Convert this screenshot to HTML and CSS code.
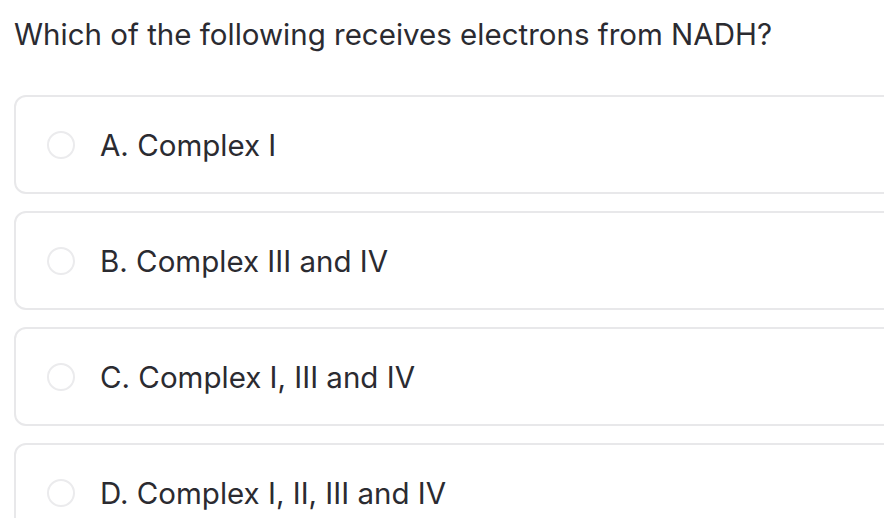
FILE: index.html
```html
<!DOCTYPE html>
<html lang="en">
<head>
    <meta charset="UTF-8">
    <title>Question</title>
    <link rel="stylesheet" href="styles.css">
</head>
<body>
    <div class="question">
        <h1 class="prompt">Which of the following receives electrons from NADH?</h1>

        <div class="choices">
            <label class="choice">
                <span class="radio"></span>
                <span class="choice-text">A. Complex I</span>
            </label>
            <label class="choice">
                <span class="radio"></span>
                <span class="choice-text">B. Complex III and IV</span>
            </label>
            <label class="choice">
                <span class="radio"></span>
                <span class="choice-text">C. Complex I, III and IV</span>
            </label>
            <label class="choice">
                <span class="radio"></span>
                <span class="choice-text">D. Complex I, II, III and IV</span>
            </label>
        </div>
    </div>
</body>
</html>
```

FILE: styles.css
```css
/* --- General Setup --- */
:root {
    --text-color: #2b2b31;
    --border-color: #e8e8ea;
}

body {
    margin: 0;
    overflow: hidden;
    background: #ffffff;
    font-family: 'Inter', 'Open Sans', sans-serif;
    color: var(--text-color);
}

.question {
    padding: 14px 0 0 14px;
}

/* --- Prompt --- */
.prompt {
    margin: 0 0 41px;
    font-size: 29.5px;
    font-weight: 400;
    line-height: 40px;
}

/* --- Answer Cards --- */
.choices {
    display: flex;
    flex-direction: column;
    gap: 17px;
    width: 900px;
}

.choice {
    display: flex;
    align-items: center;
    height: 95px;
    padding-left: 31px;
    border: 2px solid var(--border-color);
    border-radius: 12px;
    cursor: pointer;
}

.radio {
    width: 24px;
    height: 24px;
    border: 2px solid #ebebed;
    border-radius: 50%;
    flex-shrink: 0;
}

.choice-text {
    margin-left: 25px;
    font-size: 29.5px;
}
```
